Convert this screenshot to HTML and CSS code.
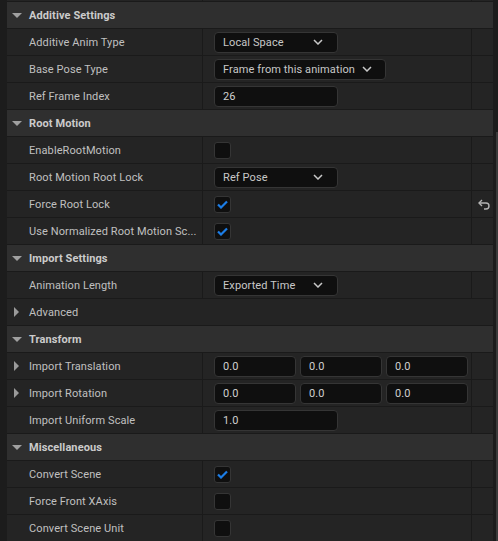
FILE: index.html
```html
<!DOCTYPE html>
<html>
<head>
    <meta charset="UTF-8">
    <link rel="stylesheet" href="styles.css">
</head>
<body>
    <div class="panel">
        <div class="details">
            <!-- row cut off at the top -->
            <div class="row">
                <div class="name"></div>
                <div class="value"></div>
                <div class="reset"></div>
            </div>

            <div class="category"><span class="arrow-down"></span>Additive Settings</div>
            <div class="row">
                <div class="name">Additive Anim Type</div>
                <div class="value">
                    <div class="combo">Local Space<svg class="chevron" width="10" height="6" viewBox="0 0 10 6"><polyline points="1,1 5,5 9,1"/></svg></div>
                </div>
                <div class="reset"></div>
            </div>
            <div class="row">
                <div class="name">Base Pose Type</div>
                <div class="value">
                    <div class="combo combo-wide">Frame from this animation<svg class="chevron" width="10" height="6" viewBox="0 0 10 6"><polyline points="1,1 5,5 9,1"/></svg></div>
                </div>
                <div class="reset"></div>
            </div>
            <div class="row">
                <div class="name">Ref Frame Index</div>
                <div class="value"><div class="field">26</div></div>
                <div class="reset"></div>
            </div>

            <div class="category"><span class="arrow-down"></span>Root Motion</div>
            <div class="row">
                <div class="name">EnableRootMotion</div>
                <div class="value"><div class="check"></div></div>
                <div class="reset"></div>
            </div>
            <div class="row">
                <div class="name">Root Motion Root Lock</div>
                <div class="value">
                    <div class="combo">Ref Pose<svg class="chevron" width="10" height="6" viewBox="0 0 10 6"><polyline points="1,1 5,5 9,1"/></svg></div>
                </div>
                <div class="reset"></div>
            </div>
            <div class="row">
                <div class="name">Force Root Lock</div>
                <div class="value">
                    <div class="check"><svg width="11" height="9" viewBox="0 0 11 9"><polyline points="1,4.5 4,7.5 10,1.5"/></svg></div>
                </div>
                <div class="reset">
                    <svg class="reset-icon" width="12" height="11" viewBox="0 0 12 11"><polyline points="4,1 1,4 4,7"/><path d="M1.5 4 H8 A3 3 0 0 1 8 10 H6"/></svg>
                </div>
            </div>
            <div class="row">
                <div class="name">Use Normalized Root Motion Sc...</div>
                <div class="value">
                    <div class="check"><svg width="11" height="9" viewBox="0 0 11 9"><polyline points="1,4.5 4,7.5 10,1.5"/></svg></div>
                </div>
                <div class="reset"></div>
            </div>

            <div class="category"><span class="arrow-down"></span>Import Settings</div>
            <div class="row">
                <div class="name">Animation Length</div>
                <div class="value">
                    <div class="combo">Exported Time<svg class="chevron" width="10" height="6" viewBox="0 0 10 6"><polyline points="1,1 5,5 9,1"/></svg></div>
                </div>
                <div class="reset"></div>
            </div>
            <div class="row row-group">
                <div class="name"><span class="arrow-right"></span>Advanced</div>
            </div>

            <div class="category"><span class="arrow-down"></span>Transform</div>
            <div class="row">
                <div class="name"><span class="arrow-right"></span>Import Translation</div>
                <div class="value vector">
                    <div class="field">0.0</div>
                    <div class="field">0.0</div>
                    <div class="field">0.0</div>
                </div>
                <div class="reset"></div>
            </div>
            <div class="row">
                <div class="name"><span class="arrow-right"></span>Import Rotation</div>
                <div class="value vector">
                    <div class="field">0.0</div>
                    <div class="field">0.0</div>
                    <div class="field">0.0</div>
                </div>
                <div class="reset"></div>
            </div>
            <div class="row">
                <div class="name">Import Uniform Scale</div>
                <div class="value"><div class="field">1.0</div></div>
                <div class="reset"></div>
            </div>

            <div class="category"><span class="arrow-down"></span>Miscellaneous</div>
            <div class="row">
                <div class="name">Convert Scene</div>
                <div class="value">
                    <div class="check"><svg width="11" height="9" viewBox="0 0 11 9"><polyline points="1,4.5 4,7.5 10,1.5"/></svg></div>
                </div>
                <div class="reset"></div>
            </div>
            <div class="row">
                <div class="name">Force Front XAxis</div>
                <div class="value"><div class="check"></div></div>
                <div class="reset"></div>
            </div>
            <div class="row">
                <div class="name">Convert Scene Unit</div>
                <div class="value"><div class="check"></div></div>
                <div class="reset"></div>
            </div>
        </div>
        <div class="scrollbar"><div class="thumb"></div></div>
    </div>
</body>
</html>
```

FILE: styles.css
```css
/* base */
html, body {
    margin: 0;
    height: 100%;
    overflow: hidden;
    background-color: #1c1c1c;
}

body {
    font-family: Roboto, "Noto Sans", sans-serif;
    font-size: 11px;
    letter-spacing: 0.1px;
    color: #c0c0c0;
}

.panel {
    display: flex;
    height: 100%;
    padding-left: 7px;
}

.details {
    width: 486px;
    margin-top: -25px;
}

/* category header */
.category {
    display: flex;
    align-items: center;
    height: 26px;
    border-bottom: 1px solid #1a1a1a;
    background-color: #2f2f2f;
    color: #cbcbcb;
    font-weight: bold;
    padding-left: 5px;
}

.arrow-down {
    width: 0;
    height: 0;
    border-left: 5px solid transparent;
    border-right: 5px solid transparent;
    border-top: 5px solid #a0a0a0;
    margin-right: 7px;
}

.arrow-right {
    width: 0;
    height: 0;
    border-top: 5px solid transparent;
    border-bottom: 5px solid transparent;
    border-left: 5px solid #9a9a9a;
    margin-left: -15px;
    margin-right: 10px;
}

/* property rows */
.row {
    display: flex;
    height: 26px;
    border-bottom: 1px solid #1a1a1a;
    background-color: #242424;
}

.row .name {
    display: flex;
    align-items: center;
    width: 196px;
    padding-left: 22px;
    box-sizing: border-box;
    border-right: 1px solid #1a1a1a;
    white-space: nowrap;
    overflow: hidden;
}

.row-group .name {
    width: 100%;
    border-right: none;
}

.row .value {
    display: flex;
    align-items: center;
    width: 269px;
    padding-left: 11px;
    box-sizing: border-box;
    border-right: 1px solid #1a1a1a;
}

.row .reset {
    display: flex;
    align-items: center;
    justify-content: center;
    flex: 1;
}

.reset-icon {
    fill: none;
    stroke: #b4b4b4;
    stroke-width: 1.4;
    margin-left: 2px;
}

/* widgets */
.combo {
    display: flex;
    align-items: center;
    width: 124px;
    height: 21px;
    padding: 0 14px 0 8px;
    box-sizing: border-box;
    background-color: #0f0f0f;
    border: 1px solid #353535;
    border-radius: 4px;
    color: #c8c8c8;
}

.combo-wide {
    width: auto;
    padding-right: 13px;
}

.chevron {
    margin-left: auto;
    fill: none;
    stroke: #c8c8c8;
    stroke-width: 1.5;
}

.combo-wide .chevron {
    margin-left: 7px;
}

.field {
    display: flex;
    align-items: center;
    width: 124px;
    height: 21px;
    padding-left: 8px;
    box-sizing: border-box;
    background-color: #0f0f0f;
    border: 1px solid #353535;
    border-radius: 4px;
    color: #d0d0d0;
}

.vector {
    gap: 4px;
}

.vector .field {
    width: 82px;
}

.check {
    display: flex;
    align-items: center;
    justify-content: center;
    width: 17px;
    height: 17px;
    box-sizing: border-box;
    background-color: #0f0f0f;
    border: 1px solid #353535;
    border-radius: 3px;
}

.check svg {
    fill: none;
    stroke: #1c7de6;
    stroke-width: 2.2;
}

/* scrollbar */
.scrollbar {
    width: 5px;
    position: relative;
}

.thumb {
    position: absolute;
    right: 0;
    top: 132px;
    bottom: 0;
    width: 2px;
    background-color: #3a3a3a;
}
```
